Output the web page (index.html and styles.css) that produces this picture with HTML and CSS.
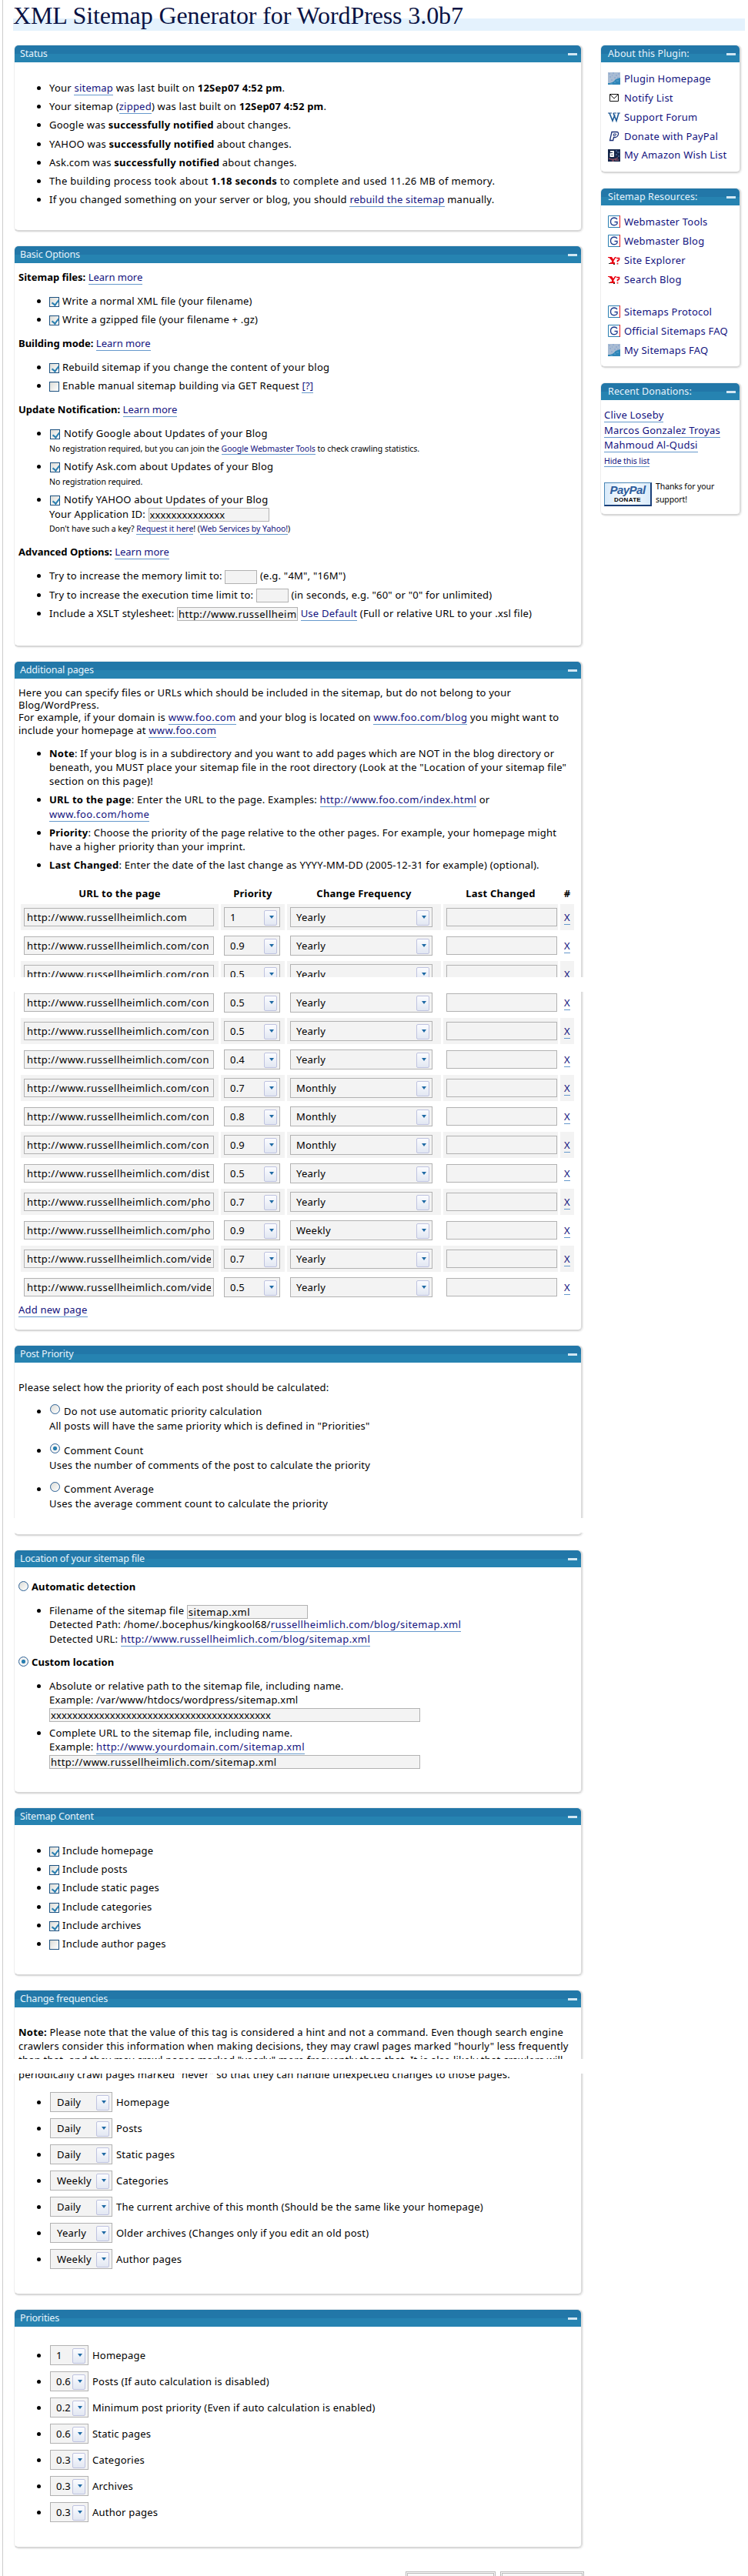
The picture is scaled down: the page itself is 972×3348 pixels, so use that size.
FILE: index.html
```html
<!DOCTYPE html>
<html lang="en">
<head>
<meta charset="utf-8">
<title>XML Sitemap Generator for WordPress</title>
<link rel="stylesheet" href="styles.css">
</head>
<body>
<svg class="defs" width="0" height="0">
  <defs>
    <symbol id="i-blog" viewBox="0 0 16 16"><rect width="16" height="16" fill="#a9bcd3"/><path d="M1 2h2M6 1h2M10 4h2M2 6h2M8 7h2M13 2h2M4 10h2M5 4h1M12 7h2" stroke="#7f9fd0"/><path d="M0 14C5 14 8 12 10 9L16 7V16H0Z" fill="#2f86b8"/><path d="M3 15h3M8 13h2M11 11h3" stroke="#65a6d0"/></symbol>
    <symbol id="i-mail" viewBox="0 0 16 16"><path d="M2.5 3.5h11v9h-11zM3 4l5 5 5-5" fill="#fff" stroke="#111"/></symbol>
    <symbol id="i-wp" viewBox="0 0 16 16"><path d="M0 3h5M7 3h4M12 3h4" stroke="#1d4f8c"/><path d="M2 3l4 10 3-8M7 3l4 10 3-10" fill="none" stroke="#1d5a96" stroke-width="1.6"/></symbol>
    <symbol id="i-pp" viewBox="0 0 16 16"><path d="M5 2.5h6.500q2.500 0 2 3t-3.500 4H7.500l-.8 4H2.500z" fill="#fff" stroke="#1b2f78" stroke-width="1.300"/><path d="M7.500 5h2.500q1 0 .5 1.200t-1.500 1H7z" fill="#fff" stroke="#1b2f78"/></symbol>
    <symbol id="i-amz" viewBox="0 0 16 16"><rect width="16" height="16" fill="#15264a"/><path d="M3 3h4v6H3.500V6H7" fill="none" stroke="#fff" stroke-width="1.800"/><path d="M10 2h2M12 4h3M10 7h2M13 9h2" stroke="#5f7fb0"/><path d="M1 12q6 3 12-1M9 14h5M5 15h3" fill="none" stroke="#b8606a"/></symbol>
    <symbol id="i-g" viewBox="0 0 16 16"><path d="M.5.5h15v15H.5z" fill="#fff" stroke="#2a7fb2"/><path d="M15.500 0v16" stroke="#f01818"/><path d="M12 5Q10.500 3 8 3 3.500 3.500 3.500 8T8 12.700q3 0 4-2V8.500H8.500" fill="none" stroke="#23408e" stroke-width="1.400"/></symbol>
    <symbol id="i-y" viewBox="0 0 16 16"><path d="M0 4h5l2 3 2-3h2L7.500 9v2H9v2H3v-2h2V9L1.500 5H0z" fill="#e80010"/><path d="M11 5.500h3.500v2L12.500 9v1.500M12.500 12v1.500" fill="none" stroke="#e80010" stroke-width="1.700"/><path d="M1 12.500h2M7 13.500h2" stroke="#222"/></symbol>
  </defs>
</svg>
<div class="page">
  <h1>XML Sitemap Generator for WordPress 3.0b7</h1>
  <div class="columns">
    <main class="main">
      <section class="box status">
        <h2>Status</h2>
        <ul>
          <li>Your <a>sitemap</a> was last built on <b>12Sep07 4:52 pm</b>.</li>
          <li>Your sitemap (<a>zipped</a>) was last built on <b>12Sep07 4:52 pm</b>.</li>
          <li>Google was <b>successfully notified</b> about changes.</li>
          <li>YAHOO was <b>successfully notified</b> about changes.</li>
          <li>Ask.com was <b>successfully notified</b> about changes.</li>
          <li>The building process took about <b>1.18 seconds</b> to complete and used 11.26 MB of memory.</li>
          <li>If you changed something on your server or blog, you should <a>rebuild the sitemap</a> manually.</li>
        </ul>
      </section>

      <section class="box basic">
        <h2>Basic Options</h2>
        <p><b>Sitemap files:</b> <a>Learn more</a></p>
        <ul>
          <li><i class="cb on"></i>Write a normal XML file (your filename)</li>
          <li><i class="cb on"></i>Write a gzipped file (your filename + .gz)</li>
        </ul>
        <p><b>Building mode:</b> <a>Learn more</a></p>
        <ul>
          <li><i class="cb on"></i>Rebuild sitemap if you change the content of your blog</li>
          <li><i class="cb"></i>Enable manual sitemap building via GET Request <a>[?]</a></li>
        </ul>
        <p><b>Update Notification:</b> <a>Learn more</a></p>
        <ul class="notify">
          <li><i class="cb on"></i>Notify Google about Updates of your Blog<br><small>No registration required, but you can join the <a>Google Webmaster Tools</a> to check crawling statistics.</small></li>
          <li><i class="cb on"></i>Notify Ask.com about Updates of your Blog<br><small>No registration required.</small></li>
          <li><i class="cb on"></i>Notify YAHOO about Updates of your Blog<br>Your Application ID: <span class="in w157 masked">xxxxxxxxxxxxxx</span><br><small>Don't have such a key? <a>Request it here</a>! (<a>Web Services by Yahoo!</a>)</small></li>
        </ul>
        <p><b>Advanced Options:</b> <a>Learn more</a></p>
        <ul>
          <li>Try to increase the memory limit to: <span class="in w42"></span> (e.g. "4M", "16M")</li>
          <li>Try to increase the execution time limit to: <span class="in w42"></span> (in seconds, e.g. "60" or "0" for unlimited)</li>
          <li>Include a XSLT stylesheet: <span class="in w157">http://www.russellheim</span> <a>Use Default</a> (Full or relative URL to your .xsl file)</li>
        </ul>
      </section>

      <section class="box additional">
        <h2>Additional pages</h2>
        <p class="intro">Here you can specify files or URLs which should be included in the sitemap, but do not belong to your<br>Blog/WordPress.<br>For example, if your domain is <a>www.foo.com</a> and your blog is located on <a>www.foo.com/blog</a> you might want to<br>include your homepage at <a>www.foo.com</a></p>
        <ul>
          <li><b>Note</b>: If your blog is in a subdirectory and you want to add pages which are NOT in the blog directory or<br>beneath, you MUST place your sitemap file in the root directory (Look at the "Location of your sitemap file"<br>section on this page)!</li>
          <li><b>URL to the page</b>: Enter the URL to the page. Examples: <a>http://www.foo.com/index.html</a> or<br><a>www.foo.com/home</a></li>
          <li><b>Priority</b>: Choose the priority of the page relative to the other pages. For example, your homepage might<br>have a higher priority than your imprint.</li>
          <li><b>Last Changed</b>: Enter the date of the last change as YYYY-MM-DD (2005-12-31 for example) (optional).</li>
        </ul>
        <div class="grid head"><b>URL to the page</b><b>Priority</b><b>Change Frequency</b><b>Last Changed</b><b>#</b></div>
        <div class="rows">
          <div class="grid"><div><span class="in">http://www.russellheimlich.com</span></div><div><span class="sel">1</span></div><div><span class="sel">Yearly</span></div><div><span class="in"></span></div><div><a>X</a></div></div>
          <div class="grid"><div><span class="in">http://www.russellheimlich.com/con</span></div><div><span class="sel">0.9</span></div><div><span class="sel">Yearly</span></div><div><span class="in"></span></div><div><a>X</a></div></div>
          <div class="grid"><div><span class="in">http://www.russellheimlich.com/con</span></div><div><span class="sel">0.5</span></div><div><span class="sel">Yearly</span></div><div><span class="in"></span></div><div><a>X</a></div></div>
          <div class="grid"><div><span class="in">http://www.russellheimlich.com/con</span></div><div><span class="sel">0.5</span></div><div><span class="sel">Yearly</span></div><div><span class="in"></span></div><div><a>X</a></div></div>
          <div class="grid"><div><span class="in">http://www.russellheimlich.com/con</span></div><div><span class="sel">0.5</span></div><div><span class="sel">Yearly</span></div><div><span class="in"></span></div><div><a>X</a></div></div>
          <div class="grid"><div><span class="in">http://www.russellheimlich.com/con</span></div><div><span class="sel">0.4</span></div><div><span class="sel">Yearly</span></div><div><span class="in"></span></div><div><a>X</a></div></div>
          <div class="grid"><div><span class="in">http://www.russellheimlich.com/con</span></div><div><span class="sel">0.7</span></div><div><span class="sel">Monthly</span></div><div><span class="in"></span></div><div><a>X</a></div></div>
          <div class="grid"><div><span class="in">http://www.russellheimlich.com/con</span></div><div><span class="sel">0.8</span></div><div><span class="sel">Monthly</span></div><div><span class="in"></span></div><div><a>X</a></div></div>
          <div class="grid"><div><span class="in">http://www.russellheimlich.com/con</span></div><div><span class="sel">0.9</span></div><div><span class="sel">Monthly</span></div><div><span class="in"></span></div><div><a>X</a></div></div>
          <div class="grid"><div><span class="in">http://www.russellheimlich.com/dist</span></div><div><span class="sel">0.5</span></div><div><span class="sel">Yearly</span></div><div><span class="in"></span></div><div><a>X</a></div></div>
          <div class="grid"><div><span class="in">http://www.russellheimlich.com/pho</span></div><div><span class="sel">0.7</span></div><div><span class="sel">Yearly</span></div><div><span class="in"></span></div><div><a>X</a></div></div>
          <div class="grid"><div><span class="in">http://www.russellheimlich.com/pho</span></div><div><span class="sel">0.9</span></div><div><span class="sel">Weekly</span></div><div><span class="in"></span></div><div><a>X</a></div></div>
          <div class="grid"><div><span class="in">http://www.russellheimlich.com/vide</span></div><div><span class="sel">0.7</span></div><div><span class="sel">Yearly</span></div><div><span class="in"></span></div><div><a>X</a></div></div>
          <div class="grid"><div><span class="in">http://www.russellheimlich.com/vide</span></div><div><span class="sel">0.5</span></div><div><span class="sel">Yearly</span></div><div><span class="in"></span></div><div><a>X</a></div></div>
        </div>
        <p class="add"><a>Add new page</a></p>
      </section>

      <section class="box postprio">
        <h2>Post Priority</h2>
        <p>Please select how the priority of each post should be calculated:</p>
        <ul>
          <li><i class="rd"></i>Do not use automatic priority calculation<br>All posts will have the same priority which is defined in "Priorities"</li>
          <li><i class="rd on"></i>Comment Count<br>Uses the number of comments of the post to calculate the priority</li>
          <li><i class="rd"></i>Comment Average<br>Uses the average comment count to calculate the priority</li>
        </ul>
      </section>

      <section class="box location">
        <h2>Location of your sitemap file</h2>
        <p><i class="rd"></i><b>Automatic detection</b></p>
        <ul>
          <li>Filename of the sitemap file <span class="in w157">sitemap.xml</span><br>Detected Path: /home/.bocephus/kingkool68/<a>russellheimlich.com/blog/sitemap.xml</a><br>Detected URL: <a>http://www.russellheimlich.com/blog/sitemap.xml</a></li>
        </ul>
        <p><i class="rd on"></i><b>Custom location</b></p>
        <ul>
          <li>Absolute or relative path to the sitemap file, including name.<br>Example: /var/www/htdocs/wordpress/sitemap.xml<br><span class="in w482 masked">xxxxxxxxxxxxxxxxxxxxxxxxxxxxxxxxxxxxxxxxx</span></li>
          <li>Complete URL to the sitemap file, including name.<br>Example: <a>http://www.yourdomain.com/sitemap.xml</a><br><span class="in w482">http://www.russellheimlich.com/sitemap.xml</span></li>
        </ul>
      </section>

      <section class="box content">
        <h2>Sitemap Content</h2>
        <ul>
          <li><i class="cb on"></i>Include homepage</li>
          <li><i class="cb on"></i>Include posts</li>
          <li><i class="cb on"></i>Include static pages</li>
          <li><i class="cb on"></i>Include categories</li>
          <li><i class="cb on"></i>Include archives</li>
          <li><i class="cb"></i>Include author pages</li>
        </ul>
      </section>

      <section class="box freq">
        <h2>Change frequencies</h2>
        <p><b>Note:</b> Please note that the value of this tag is considered a hint and not a command. Even though search engine<br>crawlers consider this information when making decisions, they may crawl pages marked "hourly" less frequently<br>than that, and they may crawl pages marked "yearly" more frequently than that. It is also likely that crawlers will<br>periodically crawl pages marked "never" so that they can handle unexpected changes to those pages.</p>
        <ul class="picks">
          <li><span class="sel">Daily</span>Homepage</li>
          <li><span class="sel">Daily</span>Posts</li>
          <li><span class="sel">Daily</span>Static pages</li>
          <li><span class="sel">Weekly</span>Categories</li>
          <li><span class="sel">Daily</span>The current archive of this month (Should be the same like your homepage)</li>
          <li><span class="sel">Yearly</span>Older archives (Changes only if you edit an old post)</li>
          <li><span class="sel">Weekly</span>Author pages</li>
        </ul>
      </section>

      <section class="box prios">
        <h2>Priorities</h2>
        <ul class="picks">
          <li><span class="sel">1</span>Homepage</li>
          <li><span class="sel">0.6</span>Posts (If auto calculation is disabled)</li>
          <li><span class="sel">0.2</span>Minimum post priority (Even if auto calculation is enabled)</li>
          <li><span class="sel">0.6</span>Static pages</li>
          <li><span class="sel">0.3</span>Categories</li>
          <li><span class="sel">0.3</span>Archives</li>
          <li><span class="sel">0.3</span>Author pages</li>
        </ul>
      </section>
      <div class="buttons"><span class="btn"></span><span class="btn short"></span></div>
    </main>

    <aside class="side">
      <section class="box about">
        <h2>About this Plugin:</h2>
        <div class="links">
          <a><svg><use href="#i-blog"/></svg>Plugin Homepage</a>
          <a><svg><use href="#i-mail"/></svg>Notify List</a>
          <a><svg><use href="#i-wp"/></svg>Support Forum</a>
          <a><svg><use href="#i-pp"/></svg>Donate with PayPal</a>
          <a><svg><use href="#i-amz"/></svg>My Amazon Wish List</a>
        </div>
      </section>
      <section class="box resources">
        <h2>Sitemap Resources:</h2>
        <div class="links">
          <a><svg><use href="#i-g"/></svg>Webmaster Tools</a>
          <a><svg><use href="#i-g"/></svg>Webmaster Blog</a>
          <a><svg><use href="#i-y"/></svg>Site Explorer</a>
          <a><svg><use href="#i-y"/></svg>Search Blog</a>
          <a class="gap"><svg><use href="#i-g"/></svg>Sitemaps Protocol</a>
          <a><svg><use href="#i-g"/></svg>Official Sitemaps FAQ</a>
          <a><svg><use href="#i-blog"/></svg>My Sitemaps FAQ</a>
        </div>
      </section>
      <section class="box donations">
        <h2>Recent Donations:</h2>
        <div class="donors">
          <div><a>Clive Loseby</a></div>
          <div><a>Marcos Gonzalez Troyas</a></div>
          <div><a>Mahmoud Al-Qudsi</a></div>
          <div><a class="tiny">Hide this list</a></div>
        </div>
        <div class="thanks"><span class="paypal"><em>PayPal</em><span>DONATE</span></span><span>Thanks for your<br>support!</span></div>
      </section>
    </aside>
  </div>
  <div class="seam s1"></div>
  <div class="seam s2"></div>
  <div class="seam s3"></div>
</div>
</body>
</html>
```
FILE: styles.css
```css
* { box-sizing: border-box; }
body { margin: 0; background: #fff; color: #000; font: 13px/18.2px "Noto Sans", sans-serif; letter-spacing: .22px; }
.defs { display: block; }
.page { position: relative; width: 969px; height: 3348px; overflow: hidden; margin-left: 3px; border-left: 1px solid #ccc; padding-left: 13px; white-space: nowrap; }
h1 { margin: 0; width: 951px; height: 40px; padding-top: 2px; font: 32px/36px "Liberation Serif", serif; letter-spacing: -.11px; color: #0b1344; background: linear-gradient(#fff 24px, #e4f2fd 24px); }
.columns { display: flex; gap: 23px; align-items: flex-start; padding: 18px 0 0 1px; }
.main { width: 739px; }
.side { width: 183px; }
a { color: #12127e; border-bottom: 1px solid #69c; }
small { font-size: 10.5px; line-height: 12px; letter-spacing: -.04px; }

.box { position: relative; border: 1px solid #eee; border-right: 2px solid #ddd; border-bottom: 2px solid #d8d8d8; border-radius: 6px; margin-bottom: 18px; box-shadow: 1px 1px 2px #eee; padding-left: 5px; }
.box h2 { position: relative; margin: 0 0 0 -5px; height: 22px; padding-left: 7px; font: 12.5px/21px "Noto Sans", sans-serif; letter-spacing: -.17px; color: #e8f4fc; background: linear-gradient(#2277a8 11px, #2683b1 11px); border-radius: 5px 5px 0 0; }
.box h2::after { content: ""; position: absolute; right: 5px; top: 10px; width: 12px; height: 3px; background: #d3e7f3; }
.box p { margin: 0; }
.box ul { margin: 13px 0 0; padding: 0 0 7.2px 40px; }
.box li { margin-bottom: 6px; }
.status { height: 243px; }
.basic { height: 522px; }
.additional { height: 871px; }
.postprio { height: 248px; }
.location { height: 317px; }
.content { height: 219px; }
.freq { height: 397px; }
.prios { height: 311px; }
.status ul { margin-top: 24px; }
.status li:nth-child(6) { letter-spacing: .33px; }
.basic h2 { margin-bottom: 9px; }
.basic p { letter-spacing: 0; }
.basic ul { padding-bottom: 6.4px; }
.basic .notify li { line-height: 18.5px; }
.additional .intro { margin-top: 10px; line-height: 16.2px; }
.additional ul { margin-top: 13px; }
.additional a, .location li a { letter-spacing: .4px; }
.postprio h2 { margin-bottom: 23px; }
.postprio li { margin-bottom: 13px; line-height: 18.8px; }
.location h2 { margin-bottom: 16px; }
.location p { letter-spacing: .1px; }
.location ul { padding-bottom: 6px; }
.content ul { margin-top: 24px; }
.freq h2 { margin-bottom: 23px; }

.cb { display: inline-block; width: 13px; height: 13px; margin-right: 4px; vertical-align: -3px; border: 1px solid #1c5180; background: linear-gradient(135deg, #dcdcd7, #fff); position: relative; }
.notify .cb { margin: 0 5px 0 1px; }
.cb.on::after { content: ""; position: absolute; left: 3.500px; top: 1px; width: 4px; height: 7px; border: solid #2a7fb0; border-width: 0 2px 2px 0; transform: rotate(38deg); }
.rd { display: inline-block; width: 13px; height: 13px; margin: 0 5px 0 1px; vertical-align: 1px; border: 1px solid #2a5f94; border-radius: 50%; background: linear-gradient(135deg, #dcdcd7, #fff); }
.rd.on { background: radial-gradient(circle, #2a7fb0 2.200px, #f4f4f4 3px); }
.location .rd { margin: 0 4px 0 0; vertical-align: -1px; }

.in { display: inline-block; height: 18px; vertical-align: middle; margin: -2px 0; padding: 0 1px; border: 1px solid #b2b2b2; background: #f3f3f3; line-height: 16px; letter-spacing: .48px; overflow: clip; overflow-clip-margin: content-box; }
.masked { letter-spacing: .1px; }
.w42 { width: 42px; }
.w157 { width: 157px; }
.w482 { width: 482px; }
.sel { position: relative; display: inline-block; height: 26px; padding-left: 8px; border: 1px solid #b2b2b2; background: #f3f3f3; line-height: 24px; }
.sel::before { content: ""; position: absolute; right: 3px; top: 3px; width: 15px; height: 18px; border: 1px solid #bfc3e0; border-radius: 2px; background: linear-gradient(#fbfcff, #e2e7f2); }
.sel::after { content: ""; position: absolute; right: 7px; top: 10px; border: 3.500px solid transparent; border-top: 4px solid #1f6aa5; border-bottom: 0; }

.grid { display: grid; grid-template-columns: 257px 83px 200px 149px 18px; gap: 3px; margin-left: 3px; height: 34px; }
.head { text-align: center; height: 18px; margin-top: 5.4px; margin-bottom: 5px; }
.rows { display: grid; gap: 3px; }
.rows .grid > div { padding: 4px; }
.rows .grid > div:nth-child(4) { padding-right: 1px; }
.rows .grid > div:last-child { padding: 8px 0 0 5px; }
.rows .grid:nth-child(odd) > div { background: #f3f3f3; }
.rows .in { display: block; margin: 1px 0; height: 24px; line-height: 23px; padding: 0 3px; }
.rows .grid > div:first-child .in { width: 247px; }
.rows .grid > div:nth-child(2) .sel { width: 73px; }
.rows .grid > div:nth-child(3) .sel { width: 185px; }
.rows .sel { display: block; padding-left: 7px; }
.additional .add { margin-top: 3px; }
.additional .add a { letter-spacing: .22px; }

.picks li { height: 34px; margin: 0; line-height: 34px; }
.picks .sel { width: 81px; margin: 0 5px 3px 1px; line-height: 24px; vertical-align: middle; }
.prios .picks .sel { width: 50px; padding-left: 7px; }
.freq .picks { margin-top: 10px; }
.prios .picks { margin-top: 20px; }

.buttons { display: flex; gap: 6px; justify-content: flex-end; margin: 30px -2px 0 0; }
.btn { width: 117px; height: 28px; border: 3px double #bbb; background: #f8f8f8; }
.short { width: 109px; }

.side .box { margin-bottom: 19px; }
.side h2 { padding-left: 9px; letter-spacing: .1px; }
.side .about { height: 167px; }
.side .resources { height: 234px; }
.side .donations { height: 173px; }
.links { padding: 9px 0 0 4px; }
.links a { display: flex; align-items: center; gap: 5px; height: 24.800px; border: 0; }
.links svg { width: 16px; height: 16px; }
.links .gap { margin-top: 17.7px; }
.donors { padding-top: 10px; margin-left: -1px; line-height: 19.600px; }
.tiny { font-size: 10.5px; letter-spacing: -.1px; }
.thanks { display: flex; gap: 5px; margin: 15px 0 0 -1px; font-size: 10.5px; line-height: 17px; letter-spacing: -.1px; }
.paypal { width: 62px; height: 31px; border: 1px solid #4a86b5; border-right: 2px solid #1b3f78; border-bottom: 2px solid #1b3f78; background: linear-gradient(90deg, #d8eafa, #fff, #d8eafa); text-align: center; margin-top: 3px; }
.paypal em { display: block; font: italic bold 15px/17px "Liberation Sans", sans-serif; color: #2c5c9c; letter-spacing: -.5px; }
.paypal span { display: block; font: bold 8px/9px "Liberation Sans", sans-serif; letter-spacing: .3px; }

.seam { position: absolute; left: -1px; width: 970px; height: 19px; background: #fff; }
.s1 { top: 1270px; }
.s2 { top: 1973px; }
.s3 { top: 2676px; }
```
